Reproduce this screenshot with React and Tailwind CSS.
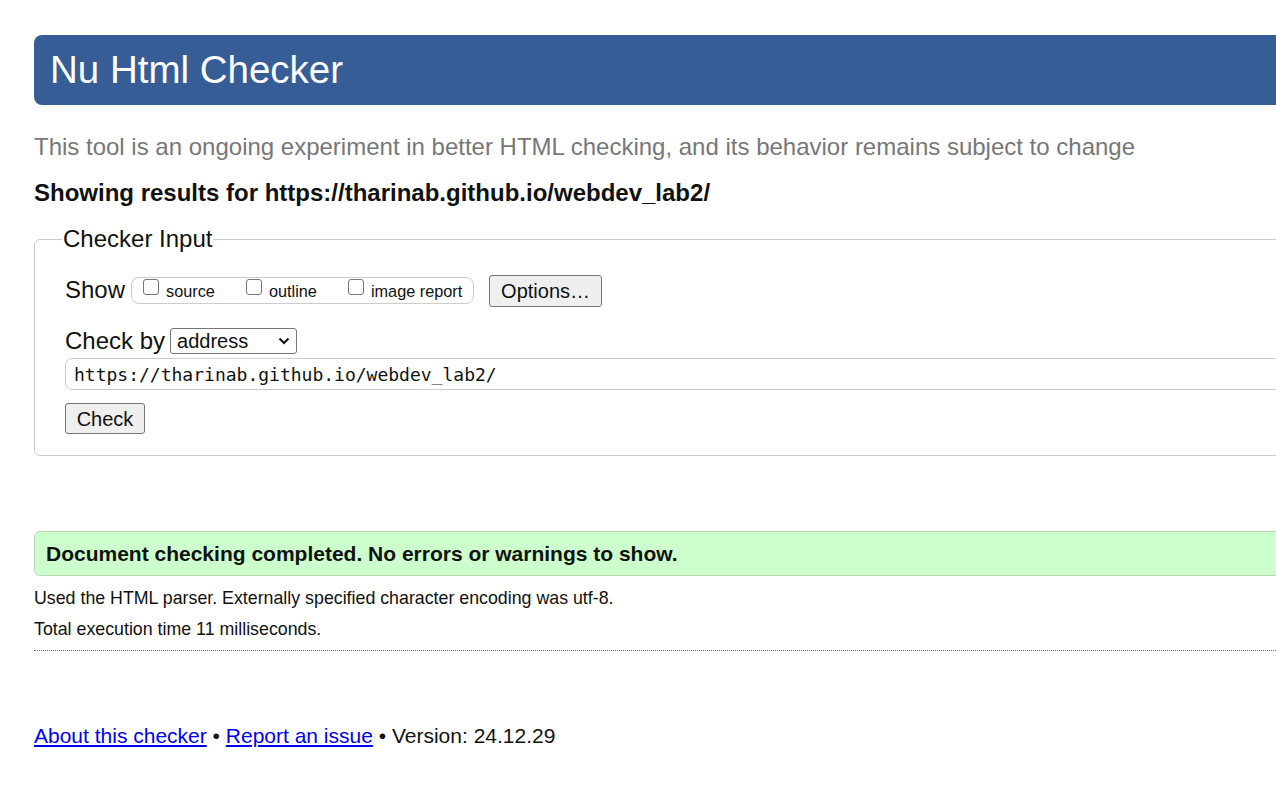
export default function App() {
  return (
    <div className="w-full overflow-hidden bg-white text-[#111] font-['Liberation_Sans',Arial,sans-serif]">
      <div className="w-[1300px] pl-[34px] pt-[35px] pb-[40px]">
        {/* header */}
        <div className="h-[70px] rounded-l-[8px] bg-[#365d95] flex items-center pl-[16px]">
          <h1 className="text-[38.5px] text-white leading-none">Nu Html Checker</h1>
        </div>

        <p className="mt-[28px] text-[24px] leading-[28px] text-[#777]">
          This tool is an ongoing experiment in better HTML checking, and its behavior remains subject to change
        </p>
        <p className="mt-[18px] text-[24px] leading-[28px] font-bold text-[#111]">
          Showing results for https://tharinab.github.io/webdev_lab2/
        </p>

        {/* checker input */}
        <fieldset className="mt-[18px] border border-[#ccc] rounded-l-[6px] pl-[30px] pb-[21px] pt-[20px]">
          <legend className="px-[1px] -ml-[3px] text-[24px] leading-[28px] text-[#111]">Checker Input</legend>

          <div className="flex items-center h-[34px]">
            <span className="text-[24px]">Show</span>
            <div className="ml-[6px] flex items-center h-[27px] w-[343px] border border-[#ccc] rounded-[8px] pl-[11px] text-[16.3px]">
              <label className="flex items-center">
                <input type="checkbox" className="appearance-none w-[16px] h-[16px] -mt-[6px] border border-[#767676] rounded-[3px] bg-white" />
                <span className="ml-[7px] mt-[2px]">source</span>
              </label>
              <label className="flex items-center ml-[31px]">
                <input type="checkbox" className="appearance-none w-[16px] h-[16px] -mt-[6px] border border-[#767676] rounded-[3px] bg-white" />
                <span className="ml-[7px] mt-[2px]">outline</span>
              </label>
              <label className="flex items-center ml-[31px]">
                <input type="checkbox" className="appearance-none w-[16px] h-[16px] -mt-[6px] border border-[#767676] rounded-[3px] bg-white" />
                <span className="ml-[7px] mt-[2px]">image report</span>
              </label>
            </div>
            <button className="ml-[15px] mt-[2px] h-[32px] w-[113px] border border-[#767676] rounded-[3px] bg-[#efefef] text-[20px] text-[#111]">
              Options…
            </button>
          </div>

          <div className="mt-[21px] flex items-center h-[26px]">
            <span className="text-[24px]">Check by</span>
            <div className="ml-[5px] relative h-[26px] w-[127px] border border-[#767676] rounded-[3px] flex items-center pl-[6px] text-[20px]">
              address
              <svg className="absolute right-[6px] top-[8px]" width="12" height="8" viewBox="0 0 12 8">
                <path d="M1.5 1.5 L6 6 L10.5 1.5" fill="none" stroke="#111" strokeWidth="2" />
              </svg>
            </div>
          </div>

          <div className="mt-[4px] h-[32px] border border-[#ccc] rounded-l-[7px] flex items-center pl-[8px] text-[18px] font-['DejaVu_Sans_Mono',monospace] text-[#111]">
            https://tharinab.github.io/webdev_lab2/
          </div>

          <button className="mt-[13px] h-[31px] w-[80px] border border-[#767676] rounded-[3px] bg-[#efefef] text-[20px] text-[#111]">
            Check
          </button>
        </fieldset>

        {/* result */}
        <div className="mt-[75px] h-[45px] rounded-l-[6px] border border-[#b7d7b7] bg-[#ccffcc] flex items-center pl-[11px]">
          <span className="text-[21px] font-bold text-[#111]">Document checking completed. No errors or warnings to show.</span>
        </div>

        <p className="mt-[12px] text-[17.8px] leading-[20px]">Used the HTML parser. Externally specified character encoding was utf-8.</p>
        <p className="mt-[11px] text-[17.8px] leading-[20px]">Total execution time 11 milliseconds.</p>
        <div className="mt-[11px] border-t border-dotted border-[#777]"></div>

        {/* footer */}
        <p className="mt-[73px] text-[21px] leading-[24px] text-[#111]">
          <a className="text-[#0000ee] underline" href="#">About this checker</a>
          {' • '}
          <a className="text-[#0000ee] underline" href="#">Report an issue</a>
          {' • Version: 24.12.29'}
        </p>
      </div>
    </div>
  );
}
